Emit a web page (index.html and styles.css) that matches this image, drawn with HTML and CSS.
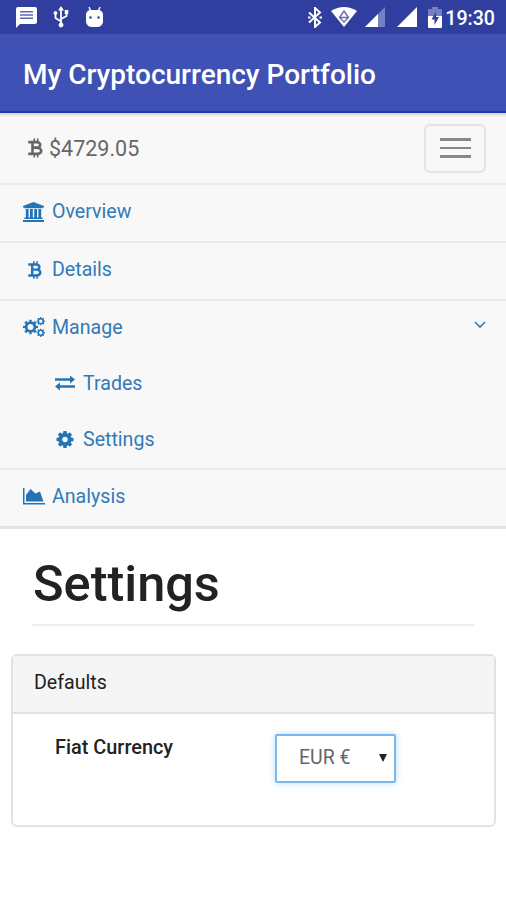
FILE: index.html
```html
<!DOCTYPE html>
<html lang="en">
<head>
    <meta charset="UTF-8" />
    <meta name="viewport" content="width=device-width, initial-scale=1" />
    <title>My Cryptocurrency Portfolio</title>
    <link rel="stylesheet" href="styles.css">
</head>

<body>
    <svg class="sprite" aria-hidden="true">
        <symbol id="cog" viewBox="0 128 1536 1536">
            <path d="M1024 896q0-106-75-181t-181-75-181 75-75 181 75 181 181 75 181-75 75-181zm512-109v222q0 12-8 23t-20 13l-185 28q-19 54-39 91 35 50 107 138 10 12 10 25t-9 23q-27 37-99 108t-94 71q-12 0-26-9l-138-108q-44 23-91 38-16 136-29 186-7 28-36 28h-222q-14 0-24.5-8.5t-11.5-21.5l-28-184q-49-16-90-37l-141 107q-10 9-25 9-14 0-25-11-126-114-165-168-7-10-7-23 0-12 8-23 15-21 51-66.5t54-70.5q-27-50-41-99l-183-27q-13-2-21-12.5t-8-23.5v-222q0-12 8-23t19-13l186-28q14-46 39-92-40-57-107-138-10-12-10-24 0-10 9-23 26-36 98.5-107.5t94.5-71.5q13 0 26 10l138 107q44-23 91-38 16-136 29-186 7-28 36-28h222q14 0 24.5 8.5t11.5 21.5l28 184q49 16 90 37l142-107q9-9 24-9 13 0 25 10 129 119 165 170 7 8 7 22 0 12-8 23-15 21-51 66.5t-54 70.5q26 50 41 98l183 28q13 2 21 12.5t8 23.5z" />
        </symbol>
        <symbol id="gear" viewBox="0 0 14 14">
            <g fill="none" stroke="currentColor">
                <circle cx="7" cy="7" r="4.100" stroke-width="2.600" />
                <circle cx="7" cy="7" r="6" stroke-width="2" pathLength="16" stroke-dasharray="1 1" stroke-dashoffset=".5" />
            </g>
        </symbol>
        <symbol id="bitcoin" viewBox="0 0 15 19">
            <g fill="none" stroke="currentColor">
                <path d="M6.300 0v3.500M9.700 0v3.500M6.300 15.500V19M9.700 15.500V19" stroke-width="1.600" />
                <path d="M.3 3.600H8.500c5 0 5 5.500 0 5.500H5M8.500 9.100c6.300 0 6.300 6.300 0 6.300H.3M4.500 3.600v11.800" stroke-width="2.600" />
            </g>
        </symbol>
    </svg>

    <div class="status-bar">
        <div class="status-left">
            <svg width="21" height="21" viewBox="0 0 21 21">
                <path fill="#fff" d="M2 0h17q2 0 2 2v13q0 2-2 2H4l-4 4V2q0-2 2-2z" />
                <path stroke="#5d68b2" stroke-width="1.600" d="M4 4.700h13M4 8h13M4 11.300h13" />
            </svg>
            <svg width="16" height="22" viewBox="0 0 16 22" fill="#fff" stroke="#fff">
                <path fill="none" stroke-width="1.800" d="M8 3v16M8 15.500l-5.500-3.500V7M8 13l5.500-3V6" />
                <path stroke="none" d="M8 0l3 4.500H5zM11.700 4h3.600v4h-3.600z" />
                <circle cx="2.500" cy="7" r="1.500" />
                <circle cx="8" cy="19" r="2" />
            </svg>
            <svg width="19" height="20" viewBox="0 0 19 20">
                <path stroke="#fff" stroke-width="1.500" d="M4 0l2 5M15 0l-2 5" />
                <path fill="#fff" d="M1 7q1-4 5-4h7q4 0 5 4v8q-1 5-6 5H7q-5 0-6-5z" />
                <circle cx="5.500" cy="10.500" r="1.200" fill="#303f9f" />
                <circle cx="13.500" cy="10.500" r="1.200" fill="#303f9f" />
            </svg>
        </div>
        <div class="status-right">
            <svg width="14" height="21" viewBox="0 0 14 21" fill="none" stroke="#fff" stroke-width="2">
                <path d="M1 5.500l11 10L7 20V1l5 4.500-11 10" />
                <path stroke="none" fill="#fff" d="M0 9.500h2.500v2H0zM11.500 9.500H14v2h-2.500z" />
            </svg>
            <svg class="wifi" width="26" height="20" viewBox="0 0 26 20">
                <path fill="#fff" d="M0 4Q13-4 26 4L13 20z" />
                <path fill="none" stroke="#6470b5" stroke-width="1.400" d="M13 4l4.500 6.500L13 15l-4.500-4.500zM8.500 10.500h9" />
            </svg>
            <svg class="signal" width="20" height="20" viewBox="0 0 20 20">
                <path fill="#7480c2" d="M20 0v20H0z" />
                <path fill="#fff" d="M13 7v13H0z" />
            </svg>
            <svg class="signal2" width="20" height="20" viewBox="0 0 20 20">
                <path fill="#fff" d="M20 0v20H0z" />
            </svg>
            <svg class="battery" width="14" height="21" viewBox="0 0 14 21">
                <path fill="#7480c2" d="M4 0h6v2h3q1 0 1 1v6H0V3q0-1 1-1h3z" />
                <path fill="#fff" d="M0 9h14v11q0 1-1 1H1q-1 0-1-1z" />
                <path fill="#303f9f" d="M8 4.500L3.500 12.500h3V18l4.500-8H8z" />
            </svg>
            <span class="clock">19:30</span>
        </div>
    </div>

    <header class="app-bar">My Cryptocurrency Portfolio</header>

    <nav class="navbar">
        <div class="navbar-header">
            <div class="brand">
                <svg width="15" height="20"><use href="#bitcoin" /></svg>
                <span>$4729.05</span>
            </div>
            <button class="toggle" aria-label="Toggle navigation">
                <span class="icon-bar"></span>
                <span class="icon-bar"></span>
                <span class="icon-bar"></span>
            </button>
        </div>
        <ul class="menu">
            <li class="menu-item">
                <a class="link" href="#">
                    <svg class="icon" width="21" height="20" viewBox="0 0 21 20" fill="currentColor">
                        <path d="M10.500 0L21 4v1.500h-1.400v.8H1.400v-.8H0V4zM2.800 7h2.800v8.500H7V7h2.800v8.500h1.400V7H14v8.500h1.400V7h2.800v8.500h1.400v1.500H1.400v-1.500h1.400zM0 18h21v2H0z" />
                    </svg>
                    <span>Overview</span>
                </a>
            </li>
            <li class="menu-item">
                <a class="link" href="#">
                    <svg class="icon" width="21" height="18">
                        <use href="#bitcoin" x="5" width="14" height="18" />
                    </svg>
                    <span>Details</span>
                </a>
            </li>
            <li class="menu-item">
                <a class="link" href="#">
                    <svg class="icon wide" width="22" height="20">
                        <use href="#gear" x="0" y="2.500" width="15" height="15" />
                        <use href="#gear" x="13.500" y="0" width="8.500" height="8.500" />
                        <use href="#gear" x="13.500" y="11.500" width="8.500" height="8.500" />
                    </svg>
                    <span>Manage</span>
                    <svg class="chevron" width="12" height="8" viewBox="0 0 12 8" fill="none" stroke="currentColor" stroke-width="1.600">
                        <path d="M1 1l5 5 5-5" />
                    </svg>
                </a>
                <ul class="submenu">
                    <li>
                        <a class="link" href="#">
                            <svg class="icon" width="20" height="16" viewBox="0 0 20 16" fill="currentColor">
                                <path d="M0 3.200h15V.5L20 4.500l-5 4V5.800H0zM20 10.200H5V7.500l-5 4 5 4v-2.700h15z" />
                            </svg>
                            <span>Trades</span>
                        </a>
                    </li>
                    <li>
                        <a class="link" href="#">
                            <svg class="icon" width="20" height="17"><use href="#cog" /></svg>
                            <span>Settings</span>
                        </a>
                    </li>
                </ul>
            </li>
            <li class="menu-item">
                <a class="link" href="#">
                    <svg class="icon wide" width="22" height="17" viewBox="0 0 22 17" fill="currentColor">
                        <path d="M0 0h1.500v15H22v1.500H0zM3 13.500V7l4.500-6 5 4.500L17 3.500l3.500 10z" />
                    </svg>
                    <span>Analysis</span>
                </a>
            </li>
        </ul>
    </nav>

    <main class="page">
        <h1 class="page-header">Settings</h1>
        <section class="panel">
            <div class="panel-heading">Defaults</div>
            <div class="panel-body">
                <label class="label" for="currency">Fiat Currency</label>
                <div class="select-box">
                    <select id="currency" class="select">
                        <option>EUR €</option>
                    </select>
                    <svg class="caret" width="8" height="8" viewBox="0 0 8 8">
                        <path fill="#222" d="M0 0h8L4 8z" />
                    </svg>
                </div>
            </div>
        </section>
    </main>
</body>

</html>
```

FILE: styles.css
```css
* {
    box-sizing: border-box;
}

body {
    margin: 0;
    background: #fff;
    color: #222;
    font-family: Roboto, sans-serif;
    font-size: 19.6px;
}

ul {
    list-style: none;
    margin: 0;
    padding: 0;
}

svg {
    display: block;
    flex: none;
}

.sprite {
    display: none;
}

#cog {
    fill: currentColor;
}

.status-bar {
    display: flex;
    justify-content: space-between;
    height: 34px;
    padding: 0 11px 0 16px;
    background: #303f9f;
    color: #fff;
}

.status-left,
.status-right {
    display: flex;
    align-items: center;
}

.status-left {
    gap: 16px;
}

.wifi {
    margin-left: 9px;
}

.signal {
    margin-left: 8px;
}

.signal2 {
    margin-left: 12px;
}

.battery {
    margin-left: 11px;
}

.clock {
    margin-left: 3px;
    padding-top: 2px;
    font-size: 19.6px;
    font-weight: 500;
}

.app-bar {
    display: flex;
    align-items: center;
    height: 79px;
    padding: 4px 23px 0;
    background: #3f51b5;
    border-bottom: 2px solid #2038a8;
    color: #fff;
    font-size: 28px;
    font-weight: 500;
}

.navbar {
    background: #f8f8f8 linear-gradient(#d0d0d0, #f8f8f8) 0 0 / 100% 4px no-repeat;
    border-bottom: 3px solid #e4e4e4;
}

.navbar-header {
    display: flex;
    justify-content: space-between;
    align-items: center;
    height: 70px;
    padding: 0 20px 0 28px;
}

.brand {
    display: flex;
    align-items: center;
    gap: 6px;
    color: #666;
    font-size: 21.5px;
}

.toggle {
    display: flex;
    flex-direction: column;
    align-items: center;
    justify-content: center;
    gap: 6px;
    width: 62px;
    height: 49px;
    padding: 0;
    background: transparent;
    border: 2px solid #e3e3e3;
    border-radius: 6px;
}

.icon-bar {
    width: 31px;
    height: 2.5px;
    background: #888;
}

.menu-item {
    border-top: 2px solid #ebebeb;
}

.link {
    display: flex;
    align-items: center;
    gap: 8px;
    height: 55.8px;
    padding: 0 20px 2px 23px;
    color: #337ab7;
    text-decoration: none;
}

.icon {
    color: #2474b5;
}

.wide {
    margin-right: -1px;
}

.chevron {
    margin-left: auto;
    margin-bottom: 4px;
}

.submenu .link {
    padding-left: 55px;
}

.page {
    padding: 0 10px 0 11px;
}

.page-header {
    margin: 0 21px 28px;
    height: 97px;
    padding: 25px 0 0 1px;
    border-bottom: 2px solid #eee;
    font-size: 50.5px;
    font-weight: 500;
    line-height: 60px;
}

.panel {
    height: 173px;
    border: 2px solid #e2e2e2;
    border-radius: 6px;
}

.panel-heading {
    height: 58px;
    padding: 0 21px;
    background: #f5f5f5;
    border-bottom: 2px solid #e2e2e2;
    line-height: 54px;
}

.panel-body {
    display: flex;
    padding: 20px 42px;
}

.label {
    width: 220px;
    padding-top: 2px;
    font-size: 19.9px;
    font-weight: 500;
}

.select-box {
    display: grid;
    align-items: center;
    width: 121px;
    height: 49px;
}

.select,
.caret {
    grid-area: 1 / 1;
}

.select {
    width: 100%;
    height: 100%;
    padding: 0 22px 1px;
    appearance: none;
    background: #fff;
    border: 2px solid #7bb8ea;
    border-radius: 2px;
    outline: none;
    box-shadow: 0 0 7px #b5dcfa;
    color: #666;
    font-family: inherit;
    font-size: 19.5px;
}

.caret {
    justify-self: end;
    margin-right: 9px;
    pointer-events: none;
}
```
